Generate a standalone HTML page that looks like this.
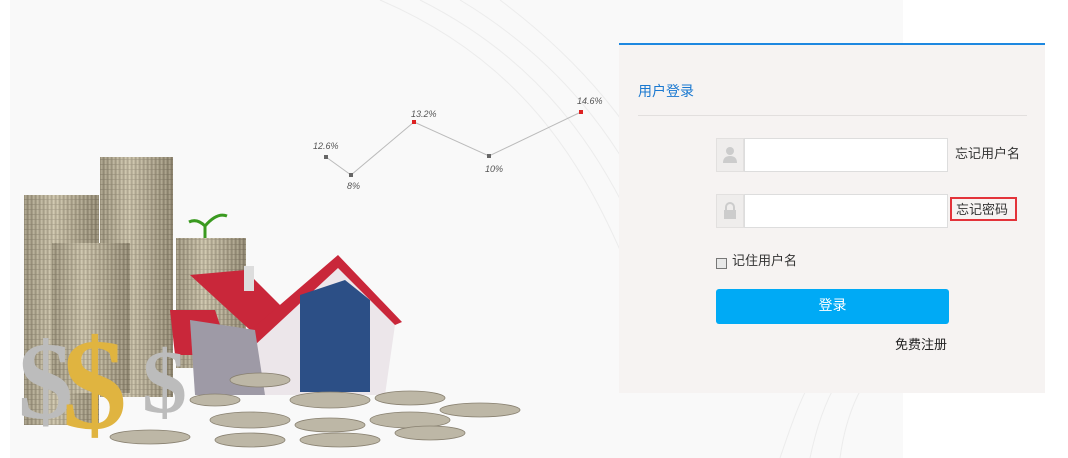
<!DOCTYPE html>
<html><head><meta charset="utf-8"><style>
*{margin:0;padding:0;box-sizing:border-box}
body{width:1068px;height:458px;background:#fff;position:relative;overflow:hidden;font-family:"Liberation Sans","Noto Sans CJK SC",sans-serif;font-size:13px;color:#333}
.bg{position:absolute;left:10px;top:0;width:893px;height:458px;background:#f9f9f9}
.panel{position:absolute;left:619px;top:43px;width:426px;height:350px;background:#f6f3f2;border-top:2px solid #1e88e0}
.abs{position:absolute}
.title{left:19px;top:36px;color:#1a78d0;font-size:14px}
.div{left:19px;top:70px;width:389px;height:1px;background:#e2dfde}
.ib{width:28px;height:34px;background:#efedec;border:1px solid #e2e0df}
.in{width:204px;height:34px;background:#fff;border:1px solid #ddd}
.btn{left:97px;top:244px;width:233px;height:35px;background:#00aaf5;border-radius:3px;color:#fff;text-align:center;line-height:33px;font-size:14px}
</style></head><body>
<div class="bg"></div>
<svg class="abs" style="left:0;top:0" width="905" height="458">
<g fill="none" stroke="#ececec" stroke-width="1">
<path d="M380 0 C520 60 580 160 620 250"/><path d="M420 0 C540 60 600 150 640 240"/><path d="M460 0 C560 60 620 140 660 230"/><path d="M500 0 C580 60 640 130 680 220"/>
<path d="M905 300 C820 330 800 400 780 458"/><path d="M905 320 C840 350 820 410 810 458"/><path d="M905 340 C860 370 845 420 840 458"/>
</g>
<polyline points="326,157 351,175 414,122 489,156 581,112" fill="none" stroke="#bbb" stroke-width="1"/>
<g fill="#666"><rect x="324" y="155" width="4" height="4"/><rect x="349" y="173" width="4" height="4"/><rect x="487" y="154" width="4" height="4"/></g>
<g fill="#d22"><rect x="412" y="120" width="4" height="4"/><rect x="579" y="110" width="4" height="4"/></g>
<g font-size="9" font-style="italic" fill="#555" font-family="Liberation Sans,sans-serif">
<text x="313" y="149">12.6%</text><text x="347" y="189">8%</text><text x="411" y="117">13.2%</text><text x="485" y="172">10%</text><text x="577" y="104">14.6%</text></g>
<defs><linearGradient id="c" x1="0" x2="1"><stop offset="0" stop-color="#8d8570"/><stop offset=".4" stop-color="#d8d0b8"/><stop offset="1" stop-color="#7a715d"/></linearGradient>
<pattern id="s" width="4" height="5" patternUnits="userSpaceOnUse"><rect width="4" height="5" fill="url(#c)"/><rect y="4" width="4" height="1" fill="#6d6555" opacity=".5"/></pattern></defs>
<rect x="24" y="195" width="75" height="230" fill="url(#c)"/><rect x="24" y="195" width="75" height="230" fill="url(#s)" opacity=".5"/>
<rect x="100" y="157" width="73" height="240" fill="url(#c)"/><rect x="100" y="157" width="73" height="240" fill="url(#s)" opacity=".5"/>
<rect x="52" y="243" width="78" height="150" fill="url(#c)"/><rect x="52" y="243" width="78" height="150" fill="url(#s)" opacity=".5"/>
<rect x="176" y="238" width="70" height="130" fill="url(#c)"/><rect x="176" y="238" width="70" height="130" fill="url(#s)" opacity=".5"/>
<path d="M205 238 v-14 M205 226 q-8-8-16-4 M205 226 q12-14 22-10" stroke="#3a9a20" stroke-width="3" fill="none"/>
<polygon points="170,310 215,310 230,355 175,355" fill="#c9273a"/>
<polygon points="190,275 245,270 300,325 250,330" fill="#c9273a"/>
<polygon points="255,340 338,262 395,325 385,395 265,395" fill="#ece6ea"/>
<polygon points="245,335 338,255 402,322 395,325 338,268 255,345" fill="#c9273a"/>
<polygon points="300,295 345,280 370,300 370,392 300,392" fill="#2c4f86"/>
<polygon points="190,320 255,330 265,395 195,395" fill="#9e9aa6"/>
<rect x="244" y="266" width="10" height="25" fill="#ddd"/>
<g fill="#bdb7a6" stroke="#888070" stroke-width=".8">
<ellipse cx="260" cy="380" rx="30" ry="7"/><ellipse cx="330" cy="400" rx="40" ry="8"/><ellipse cx="410" cy="398" rx="35" ry="7"/><ellipse cx="480" cy="410" rx="40" ry="7"/>
<ellipse cx="250" cy="420" rx="40" ry="8"/><ellipse cx="330" cy="425" rx="35" ry="7"/><ellipse cx="410" cy="420" rx="40" ry="8"/><ellipse cx="150" cy="437" rx="40" ry="7"/>
<ellipse cx="250" cy="440" rx="35" ry="7"/><ellipse cx="340" cy="440" rx="40" ry="7"/><ellipse cx="430" cy="433" rx="35" ry="7"/><ellipse cx="215" cy="400" rx="25" ry="6"/></g>
<g font-family="Liberation Serif,serif" font-weight="bold">
<text x="18" y="418" font-size="110" fill="#bcbcbc">$</text>
<text x="142" y="412" font-size="90" fill="#bcbcbc">$</text>
<text x="62" y="428" font-size="130" fill="#e0b440">$</text></g>
</svg>
<div class="panel">
<div class="abs title">用户登录</div>
<div class="abs div"></div>
<div class="abs ib" style="left:97px;top:93px"><svg width="26" height="32"><circle cx="13" cy="12" r="4" fill="#ccc"/><path d="M6 24q0-7 7-7t7 7z" fill="#ccc"/></svg></div>
<div class="abs in" style="left:125px;top:93px"></div>
<div class="abs" style="left:336px;top:98px">忘记用户名</div>
<div class="abs ib" style="left:97px;top:149px"><svg width="26" height="32"><rect x="7" y="15" width="12" height="9" fill="#ccc"/><path d="M9 15v-3a4 4 0 0 1 8 0v3" stroke="#ccc" stroke-width="2" fill="none"/></svg></div>
<div class="abs in" style="left:125px;top:149px"></div>
<div class="abs" style="left:331px;top:152px;width:67px;height:24px;border:2px solid #e3333a;padding:0 0 0 4px">忘记密码</div>
<div class="abs" style="left:97px;top:213px;width:11px;height:11px;border:1px solid #777;background:#e8e8e8"></div>
<div class="abs" style="left:113px;top:205px">记住用户名</div>
<div class="abs btn">登录</div>
<div class="abs" style="left:276px;top:289px;color:#222">免费注册</div>
</div>
</body></html>
